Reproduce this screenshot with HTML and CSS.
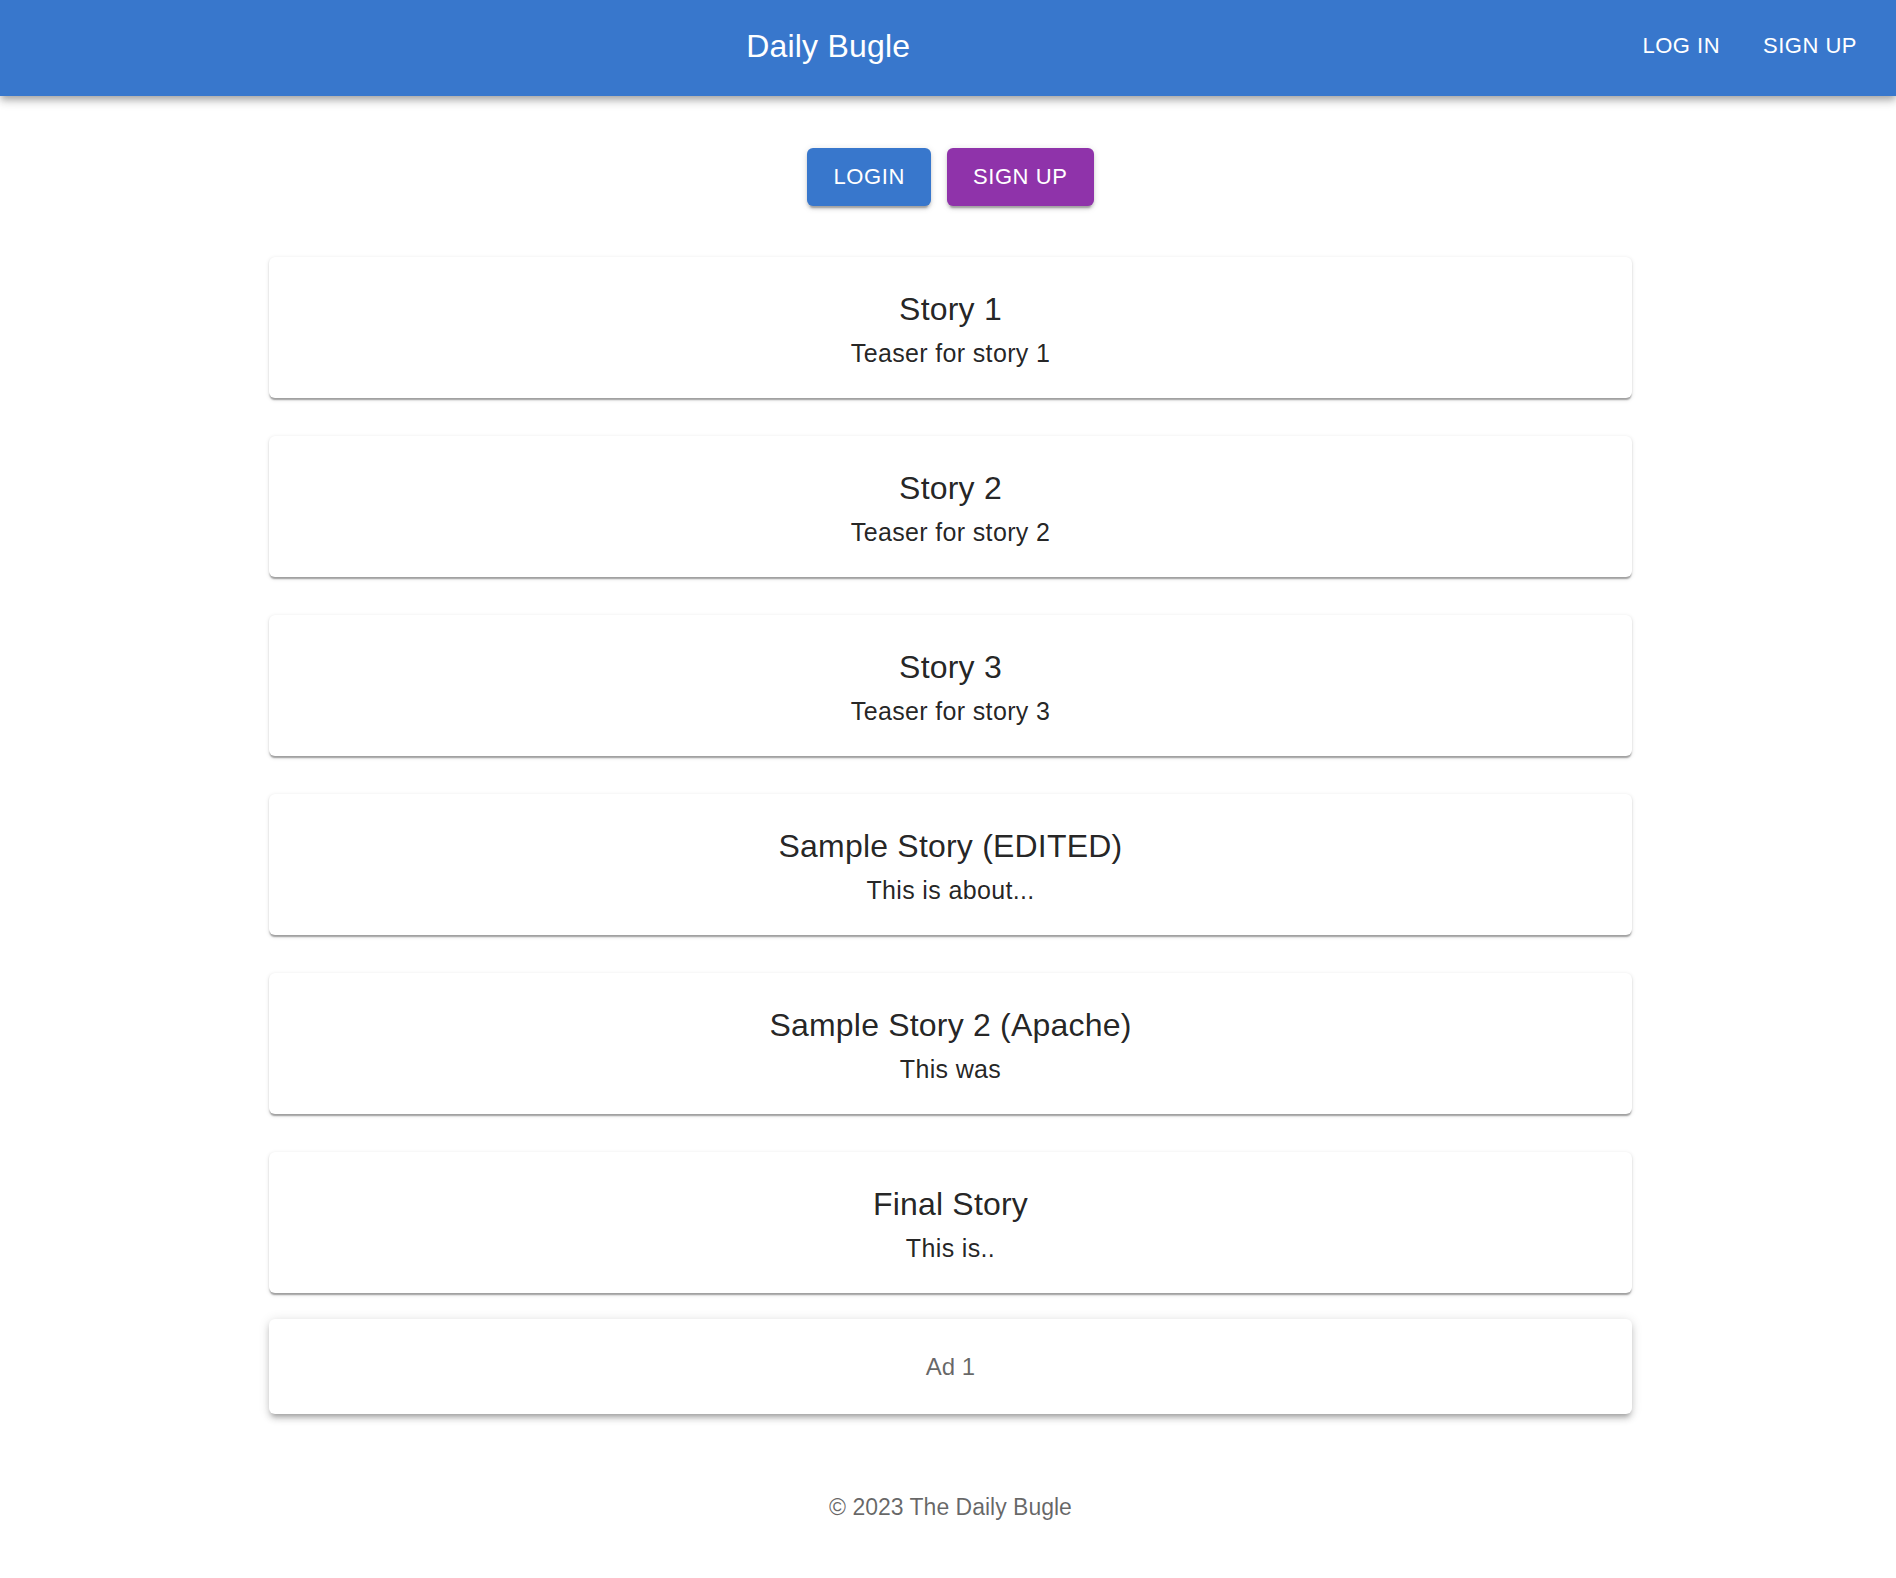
FILE: index.html
```html
<!DOCTYPE html>
<html lang="en">
<head>
<meta charset="utf-8">
<title>Daily Bugle</title>
<link rel="stylesheet" href="styles.css">
</head>
<body>
<header class="appbar">
  <div class="appbar-title">Daily Bugle</div>
  <nav class="appbar-nav">
    <button class="nav-btn">Log in</button>
    <button class="nav-btn">Sign up</button>
  </nav>
</header>
<main class="main">
  <div class="actions">
    <button class="btn btn-primary">Login</button>
    <button class="btn btn-secondary">Sign up</button>
  </div>
  <div class="stories">
    <article class="card">
      <h2 class="card-title">Story 1</h2>
      <p class="card-teaser">Teaser for story 1</p>
    </article>
    <article class="card">
      <h2 class="card-title">Story 2</h2>
      <p class="card-teaser">Teaser for story 2</p>
    </article>
    <article class="card">
      <h2 class="card-title">Story 3</h2>
      <p class="card-teaser">Teaser for story 3</p>
    </article>
    <article class="card">
      <h2 class="card-title">Sample Story (EDITED)</h2>
      <p class="card-teaser">This is about...</p>
    </article>
    <article class="card">
      <h2 class="card-title">Sample Story 2 (Apache)</h2>
      <p class="card-teaser">This was</p>
    </article>
    <article class="card">
      <h2 class="card-title">Final Story</h2>
      <p class="card-teaser">This is..</p>
    </article>
  </div>
  <div class="ad">Ad 1</div>
  <footer class="footer">© 2023 The Daily Bugle</footer>
</main>
</body>
</html>
```

FILE: styles.css
```css
* { box-sizing: border-box; }

html, body {
  margin: 0;
  padding: 0;
  background: #ffffff;
}

body {
  font-family: "Liberation Sans", Arial, Helvetica, sans-serif;
  color: rgba(0, 0, 0, 0.87);
}

.appbar {
  height: 96px;
  display: flex;
  align-items: center;
  padding: 0 27px 0 26px;
  background: #3877cc;
  color: #ffffff;
  box-shadow: 0 3px 6px -1.5px rgba(0,0,0,0.2), 0 6px 7.5px 0 rgba(0,0,0,0.14), 0 1.5px 15px 0 rgba(0,0,0,0.12);
  position: relative;
  z-index: 2;
}

.appbar-title {
  flex: 1;
  text-align: center;
  font-size: 32px;
  font-weight: 400;
  line-height: 48px;
  letter-spacing: 0.2px;
  margin-top: -4px;
}

.appbar-nav {
  display: flex;
  gap: 19px;
}

.nav-btn {
  background: transparent;
  border: 0;
  color: #ffffff;
  font-family: inherit;
  font-size: 22px;
  letter-spacing: 0.5px;
  text-transform: uppercase;
  padding: 6px 12px;
  line-height: 30px;
  cursor: pointer;
  margin-top: -4px;
}

.main {
  padding-left: 5px;
  display: flex;
  flex-direction: column;
  align-items: center;
}

.actions {
  display: flex;
  gap: 16px;
  margin-top: 52px;
}

.btn {
  height: 58px;
  padding: 0 26px;
  border: 0;
  border-radius: 6px;
  font-family: inherit;
  font-size: 22px;
  letter-spacing: 0.6px;
  text-transform: uppercase;
  color: #ffffff;
  cursor: pointer;
  box-shadow: 0 4.5px 1.5px -3px rgba(0,0,0,0.2), 0 3px 3px 0 rgba(0,0,0,0.14), 0 1.5px 7.5px 0 rgba(0,0,0,0.12);
}

.btn-primary { background: #3877cc; }
.btn-secondary { background: #8f33aa; }

.stories {
  width: 1363px;
  margin-top: 51px;
  display: flex;
  flex-direction: column;
  gap: 38px;
}

.card {
  height: 141px;
  background: #ffffff;
  border-radius: 6px;
  padding: 28px 16px 0;
  text-align: center;
  box-shadow: 0 3px 1.5px -1.5px rgba(0,0,0,0.2), 0 1.5px 1.5px 0 rgba(0,0,0,0.14), 0 1.5px 4.5px 0 rgba(0,0,0,0.12);
}

.card-title {
  margin: 0;
  font-size: 32px;
  font-weight: 400;
  line-height: 48px;
  letter-spacing: 0.2px;
  color: rgba(0, 0, 0, 0.87);
}

.card-teaser {
  margin: 2px 0 0;
  font-size: 25px;
  line-height: 36px;
  letter-spacing: 0.35px;
  color: rgba(0, 0, 0, 0.87);
}

.ad {
  width: 1363px;
  height: 95px;
  margin-top: 26px;
  background: #ffffff;
  border-radius: 6px;
  display: flex;
  align-items: center;
  justify-content: center;
  font-size: 24px;
  line-height: 36px;
  color: rgba(0, 0, 0, 0.6);
  box-shadow: 0 4.5px 4.5px -3px rgba(0,0,0,0.2), 0 4.5px 6px 0 rgba(0,0,0,0.14), 0 1.5px 12px 0 rgba(0,0,0,0.12);
}

.footer {
  margin-top: 76px;
  font-size: 23px;
  line-height: 34px;
  color: rgba(0, 0, 0, 0.6);
  padding-bottom: 40px;
}
```
